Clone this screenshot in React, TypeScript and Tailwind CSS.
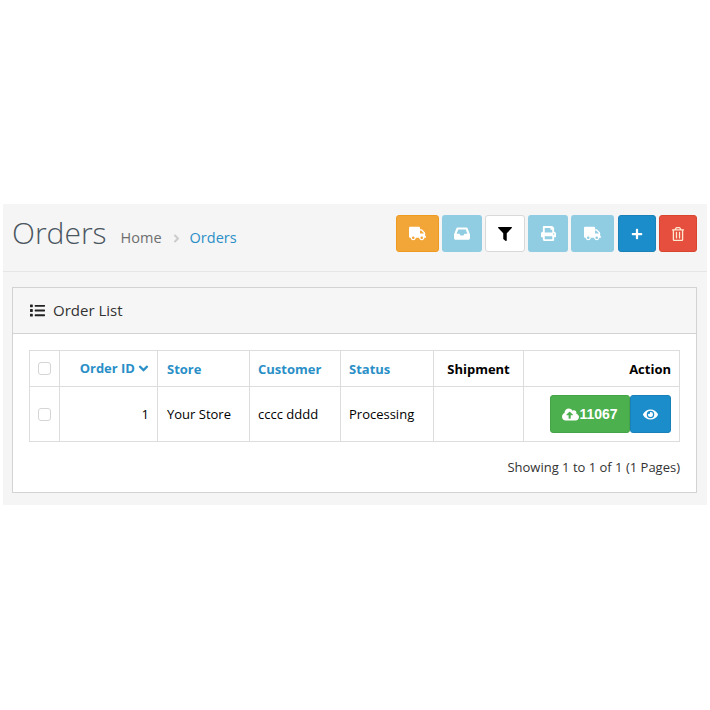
import { FaTruck, FaFilter, FaPrint, FaPlus, FaRegTrashAlt, FaList, FaCloudUploadAlt, FaEye, FaAngleRight, FaAngleDown } from "react-icons/fa"

const th = "border border-[#dddddd] px-[8px] h-[36px] text-[13px] font-bold"
const td = "border border-[#dddddd] px-[8px] h-[55px] text-[13px] text-black font-normal"

const Check = () => (
  <div className="mx-auto w-[13px] h-[13px] rounded-[3px] border border-[#d5d5d5] bg-white" />
)

const InboxIcon = () => (
  <svg width="16" height="13" viewBox="0 0 16 13" fill="currentColor">
    <path
      fillRule="evenodd"
      d="M3.4 0.5h9.2c.4 0 .7.2.9.6L15.8 7c.1.2.2.5.2.7V11c0 1-.8 1.8-1.8 1.8H1.8C.8 12.8 0 12 0 11V7.7c0-.2.1-.5.2-.7L2.500 1.100c.2-.4.5-.6.9-.6zM4.300 2.500 2.600 6.800h2.900l1 1.600h3l1-1.600h2.900L11.700 2.500z"
    />
  </svg>
)

export default function App() {
  return (
    <div className="w-[710px] h-[710px] bg-white pt-[204px] px-[3px] font-['Open_Sans',sans-serif]">
      <div className="w-[704px] h-[301px] bg-[#f5f5f5]">
        <div className="h-[68px] flex items-start justify-between border-b border-[#e6e6e6] pl-[9px] pr-[10px] pt-[11px]">
          <div className="flex items-center h-[37px]">
            <h1 className="text-[30px] font-light text-[#4a5560] leading-none mr-[14px] -mt-[2px]">Orders</h1>
            <div className="flex items-center text-[14.5px] mt-[9px]">
              <span className="text-[#6e6e6e]">Home</span>
              <FaAngleRight className="ml-[8px] mr-[7px] text-[#cccccc] text-[13px]" />
              <span className="text-[#2a8fc7]">Orders</span>
            </div>
          </div>
          <div className="flex">
            <button className="w-[43px] h-[37px] rounded-[3px] bg-[#f3a638] border border-[#ef9a20] text-white flex items-center justify-center mr-[3px]">
              <FaTruck className="text-[17px]" />
            </button>
            <button className="w-[40px] h-[37px] rounded-[3px] bg-[#90cde2] text-white flex items-center justify-center mr-[3px]">
              <InboxIcon />
            </button>
            <button className="w-[40px] h-[37px] rounded-[3px] bg-white border border-[#d9d9d9] text-black flex items-center justify-center mr-[3px]">
              <FaFilter className="text-[14px]" />
            </button>
            <button className="w-[40px] h-[37px] rounded-[3px] bg-[#90cde2] text-white flex items-center justify-center mr-[3px]">
              <FaPrint className="text-[15px]" />
            </button>
            <button className="w-[43px] h-[37px] rounded-[3px] bg-[#90cde2] text-white flex items-center justify-center mr-[4px]">
              <FaTruck className="text-[17px]" />
            </button>
            <button className="w-[38px] h-[37px] rounded-[3px] bg-[#1b8dcb] border border-[#1a80b8] text-white flex items-center justify-center mr-[3px]">
              <FaPlus className="text-[12px]" />
            </button>
            <button className="w-[38px] h-[37px] rounded-[3px] bg-[#e64f3d] border border-[#d9452f] text-[#fde8d0] flex items-center justify-center">
              <FaRegTrashAlt className="text-[14px]" />
            </button>
          </div>
        </div>
        <div className="mt-[15px] mx-[9px] w-[685px] h-[206px] bg-white border border-[#d3d3d3]">
          <div className="h-[46px] bg-[#f6f6f6] border-b border-[#d3d3d3] flex items-center pl-[17px] text-[15px] text-[#333333]">
            <FaList className="text-[15px] mr-[8px] text-[#222222]" />
            Order List
          </div>
          <div className="px-[16px] pt-[16px]">
            <table className="w-[651px] table-fixed border-collapse">
              <thead>
                <tr>
                  <th className={`${th} w-[30px]`}><Check /></th>
                  <th className={`${th} w-[98px] text-right text-[#2a8fc7]`}>
                    <span className="inline-flex items-center">Order ID<FaAngleDown className="ml-[1px] -mr-[2px] text-[15px]" /></span>
                  </th>
                  <th className={`${th} w-[92px] text-left text-[#2a8fc7] pt-[2px] pl-[9px]`}>Store</th>
                  <th className={`${th} w-[91px] text-left text-[#2a8fc7] pt-[2px]`}>Customer</th>
                  <th className={`${th} w-[93px] text-left text-[#2a8fc7] pt-[2px]`}>Status</th>
                  <th className={`${th} w-[90px] text-center text-black pt-[2px]`}>Shipment</th>
                  <th className={`${th} text-right text-black pt-[2px]`}>Action</th>
                </tr>
              </thead>
              <tbody>
                <tr>
                  <td className={td}><Check /></td>
                  <td className={`${td} text-right pt-[2px]`}>1</td>
                  <td className={`${td} pt-[2px] pl-[9px]`}>Your Store</td>
                  <td className={`${td} pt-[2px]`}>cccc dddd</td>
                  <td className={`${td} pt-[2px]`}>Processing</td>
                  <td className={td}></td>
                  <td className={td}>
                    <div className="flex justify-end">
                      <button className="w-[80px] h-[38px] rounded-[3px] bg-[#4cb04f] border border-[#45a348] text-white flex items-center justify-center font-['Liberation_Sans',sans-serif] font-bold text-[14px]">
                        <FaCloudUploadAlt className="text-[17px]" />11067
                      </button>
                      <button className="w-[41px] h-[38px] rounded-[3px] bg-[#1b8dcb] border border-[#1a80b8] text-white flex items-center justify-center">
                        <FaEye className="text-[15px]" />
                      </button>
                    </div>
                  </td>
                </tr>
              </tbody>
            </table>
            <div className="text-right text-[13px] text-[#333333] mt-[16px] leading-[18px]">
              Showing 1 to 1 of 1 (1 Pages)
            </div>
          </div>
        </div>
      </div>
    </div>
  )
}
